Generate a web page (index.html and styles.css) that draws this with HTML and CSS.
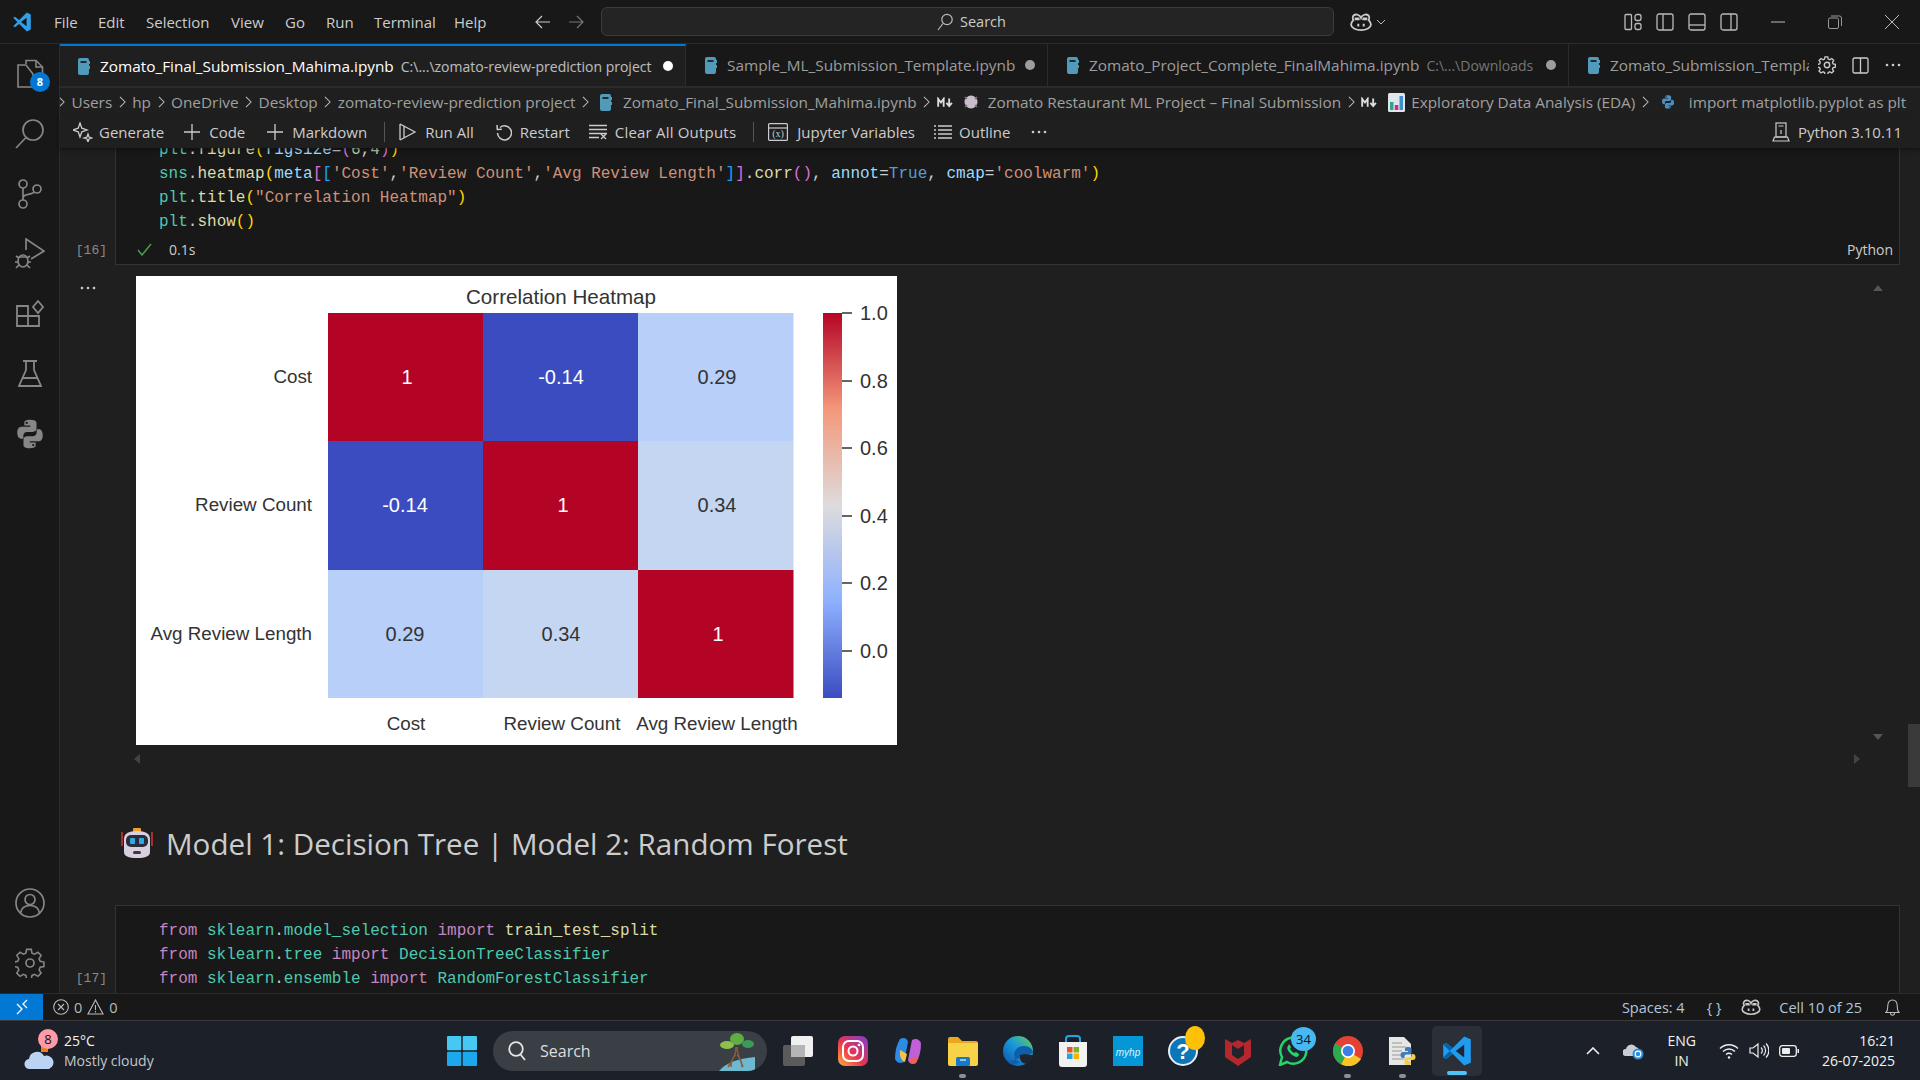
FILE: index.html
```html
<!DOCTYPE html>
<html lang="en">
  <head>
    <meta charset="UTF-8" />
    <title>Zomato_Final_Submission_Mahima.ipynb</title>
    <link rel="stylesheet" href="styles.css">
  </head>
  <body>
    <svg class="defs">
      <symbol id="nb" viewBox="0 0 12 17"><rect x="0" y="0" width="11" height="17" rx="2" fill="#519aba"/><rect x="2.5" y="3" width="6" height="2" fill="#1f2c33"/><rect x="11" y="3" width="1" height="3" fill="#519aba"/><rect x="11" y="8" width="1" height="3" fill="#519aba"/></symbol>
      <symbol id="py" viewBox="0 0 24 24"><path fill="currentColor" d="M12 2C8 2 8 3.7 8 3.7V6h4.2v.8H6.1S3 6.5 3 11s2.7 4.4 2.7 4.4h1.6v-2.2s-.1-2.7 2.7-2.7h4.1s2.5 0 2.500-2.500V4.500S17.100 2 12 2zM9.700 3.400a.8.8 0 1 1 0 1.600.8.8 0 0 1 0-1.600z"/><path fill="currentColor" transform="rotate(180 12 12)" d="M12 2C8 2 8 3.700 8 3.700V6h4.200v.8H6.100S3 6.500 3 11s2.700 4.400 2.700 4.400h1.600v-2.200s-.1-2.700 2.700-2.700h4.100s2.500 0 2.500-2.500V4.500S17.100 2 12 2zM9.700 3.400a.8.8 0 1 1 0 1.600.8.8 0 0 1 0-1.600z"/></symbol>
      <symbol id="copilot" viewBox="0 0 24 20"><path d="M12 5.500C10.500 1.500 6 1 4 2.500 2.500 3.800 2.600 6.500 3.500 8 2 9.500 1 11 1 13c0 3 5 6 11 6s11-3 11-6c0-2-1-3.500-2.500-5 .9-1.500 1-4.200-.5-5.500C18 1 13.500 1.500 12 5.500z" fill="none" stroke="currentColor" stroke-width="2"/><path d="M5 5h4.500a2 2 0 0 1 1 2v1H5zM19 5h-4.500a2 2 0 0 0-1 2v1H19z" fill="currentColor"/><path d="M9 12v3M15 12v3" stroke="currentColor" stroke-width="2.200"/></symbol>
      <symbol id="plus" viewBox="0 0 16 16"><path d="M8 0v16M0 8h16" stroke="currentColor" stroke-width="1.300" fill="none"/></symbol>
      <symbol id="chev" viewBox="0 0 8 14"><path d="M1 1l6 6-6 6" stroke="currentColor" stroke-width="1.200" fill="none"/></symbol>
      <symbol id="md" viewBox="0 0 18 12"><path d="M1 10.500V2l3 4 3-4v8.500" stroke="currentColor" stroke-width="2" fill="none"/><path d="M13 1.500V9M10 6.500l3 3.500 3-3.500" stroke="currentColor" stroke-width="2" fill="none"/></symbol>
      <symbol id="dots" viewBox="0 0 16 4"><circle cx="2" cy="2" r="1.300" fill="currentColor"/><circle cx="8" cy="2" r="1.300" fill="currentColor"/><circle cx="14" cy="2" r="1.300" fill="currentColor"/></symbol>
    </svg>

    <header class="titlebar">
      <svg class="logo" width="20" height="20" viewBox="0 0 100 100"><path fill="#2f9fe8" fill-rule="evenodd" d="M74 3L36 40 15 24 6 29 27 50 6 71l9 5 21-16 38 37 20-9V12zM73 29L45 50l28 21z"/></svg>
      <nav class="menu">
        <span>File</span><span>Edit</span><span>Selection</span><span>View</span><span>Go</span><span>Run</span><span>Terminal</span><span>Help</span>
      </nav>
      <svg class="nav-arrow" width="16" height="14" viewBox="0 0 16 14"><path d="M15 7H1M7 1L1 7l6 6" stroke="#ccc" stroke-width="1.200" fill="none"/></svg>
      <svg class="nav-arrow nav-fwd" width="16" height="14" viewBox="0 0 16 14"><path d="M1 7h14M9 1l6 6-6 6" stroke="#777" stroke-width="1.200" fill="none"/></svg>
      <div class="cmd">
        <svg width="16" height="18" viewBox="0 0 16 18"><circle cx="10" cy="6.500" r="5.200" fill="none" stroke="#bbb" stroke-width="1.200"/><path d="M6 10.500L1 17" stroke="#bbb" stroke-width="1.200"/></svg>
        <span>Search</span>
      </div>
      <svg class="title-copilot" width="22" height="18"><use href="#copilot"/></svg>
      <svg class="title-chev" width="10" height="6" viewBox="0 0 10 6"><path d="M1 1l4 4 4-4" stroke="#bbb" fill="none"/></svg>
      <div class="layout-icons">
        <svg width="18" height="18" viewBox="0 0 18 18" fill="none" stroke="#bbb" stroke-width="1.300"><rect x="1" y="1.500" width="6.500" height="15" rx="1"/><rect x="11" y="1.500" width="6" height="6" rx="2"/><rect x="11" y="10.500" width="6" height="6" rx="2"/></svg>
        <svg width="18" height="18" viewBox="0 0 18 18" fill="none" stroke="#bbb" stroke-width="1.300"><rect x="1" y="1" width="16" height="16" rx="2"/><path d="M7 1v16"/></svg>
        <svg width="18" height="18" viewBox="0 0 18 18" fill="none" stroke="#bbb" stroke-width="1.300"><rect x="1" y="1" width="16" height="16" rx="2"/><path d="M1 12h16"/></svg>
        <svg width="18" height="18" viewBox="0 0 18 18" fill="none" stroke="#bbb" stroke-width="1.300"><rect x="1" y="1" width="16" height="16" rx="2"/><path d="M11 1v16"/></svg>
      </div>
      <div class="win-btns">
        <svg width="14" height="14" viewBox="0 0 14 14"><path d="M0 7h14" stroke="#bbb"/></svg>
        <svg width="14" height="14" viewBox="0 0 14 14" fill="none" stroke="#999"><rect x=".5" y="3" width="10" height="10.500" rx="1.500"/><path d="M3 1h8.500a2 2 0 0 1 2 2v8"/></svg>
        <svg width="14" height="14" viewBox="0 0 14 14"><path d="M0 0l14 14M14 0L0 14" stroke="#bbb"/></svg>
      </div>
    </header>

    <div class="workbench">
      <aside class="activity">
        <div class="act-top">
          <div class="act-item act-files">
            <svg width="28" height="30" viewBox="0 0 28 30" fill="none" stroke="#868686" stroke-width="1.600"><path d="M10 5V1.500h10l6.500 6.500v16H17"/><path d="M20 1.500V8h6.500"/><path d="M10 6H2v22h15V15z"/></svg>
            <span class="act-badge">8</span>
          </div>
          <div class="act-item"><svg width="30" height="32" viewBox="0 0 30 32" fill="none" stroke="#868686" stroke-width="1.700"><circle cx="18" cy="12" r="10"/><path d="M11 19.500L1 30"/></svg></div>
          <div class="act-item"><svg width="24" height="30" viewBox="0 0 24 30" fill="none" stroke="#868686" stroke-width="1.700"><circle cx="5" cy="5" r="4"/><circle cx="5" cy="25" r="4"/><circle cx="19" cy="10" r="4"/><path d="M5 9v12M5 19c0-5 10-3 11-6"/></svg></div>
          <div class="act-item"><svg width="30" height="32" viewBox="0 0 30 32" fill="none" stroke="#868686" stroke-width="1.700"><path d="M11 12V1l18 12-13 8"/><ellipse cx="8" cy="23" rx="5" ry="6"/><path d="M1 18l3 2M15 18l-3 2M0 24h3M13 24h3M1 30l3-3M15 30l-3-3M4 19h8"/></svg></div>
          <div class="act-item"><svg width="28" height="28" viewBox="0 0 28 28" fill="none" stroke="#868686" stroke-width="1.800"><path d="M1 6h11v20H1zM1 16h22v10H12M12 6v10"/><path d="M22 1l5 6-5 6-5-6z"/></svg></div>
          <div class="act-item"><svg width="24" height="28" viewBox="0 0 24 28" fill="none" stroke="#868686" stroke-width="1.800"><path d="M5 1h14M8 1v9L1 26h22l-7-16V1M5 18h14"/></svg></div>
          <div class="act-item"><svg class="act-py" width="34" height="34"><use href="#py"/></svg></div>
        </div>
        <div class="act-bottom">
          <div class="act-item"><svg width="30" height="30" viewBox="0 0 30 30" fill="none" stroke="#868686" stroke-width="1.700"><circle cx="15" cy="15" r="14"/><circle cx="15" cy="11.500" r="5"/><path d="M5.500 25c1-6 5-7.500 9.500-7.500s8.500 1.500 9.500 7.500"/></svg></div>
          <div class="act-item"><svg width="30" height="30" viewBox="0 0 30 30" fill="none" stroke="#868686" stroke-width="1.700"><circle cx="15" cy="15" r="4"/><path d="M12.500 1.500h5l.8 4 2.800 1.200 3.500-2.200 3.500 3.500-2.200 3.500 1.200 2.800 4 .8v4.800l-4 .8-1.200 2.800 2.200 3.500-3.500 3.500-3.500-2.200-2.800 1.200-.8 4h-5l-.8-4-2.800-1.200-3.500 2.200-3.500-3.500 2.200-3.500-1.200-2.800-4-.8v-4.800l4-.8 1.200-2.800-2.200-3.500 3.500-3.500 3.500 2.200 2.800-1.200z" transform="scale(.93)"/></svg></div>
        </div>
      </aside>

      <main class="editor">
        <div class="tabs">
          <div class="tab tab-active tab-1">
            <svg class="tab-icon" width="12" height="17"><use href="#nb"/></svg>
            <span class="tab-name">Zomato_Final_Submission_Mahima.ipynb</span>
            <span class="tab-path">C:\...\zomato-review-prediction project</span>
            <i class="dot"></i>
          </div>
          <div class="tab tab-2">
            <svg class="tab-icon" width="12" height="17"><use href="#nb"/></svg>
            <span class="tab-name">Sample_ML_Submission_Template.ipynb</span>
            <i class="dot"></i>
          </div>
          <div class="tab tab-3">
            <svg class="tab-icon" width="12" height="17"><use href="#nb"/></svg>
            <span class="tab-name">Zomato_Project_Complete_FinalMahima.ipynb</span>
            <span class="tab-path">C:\...\Downloads</span>
            <i class="dot"></i>
          </div>
          <div class="tab tab-4">
            <svg class="tab-icon" width="12" height="17"><use href="#nb"/></svg>
            <span class="tab-name">Zomato_Submission_Template.ipynb</span>
          </div>
          <div class="tab-actions">
            <svg width="18" height="18" viewBox="0 0 30 30" fill="none" stroke="#ccc" stroke-width="2.400"><circle cx="15" cy="15" r="4.500"/><path d="M12.500 1.500h5l.8 4 2.800 1.200 3.500-2.200 3.500 3.500-2.200 3.500 1.200 2.800 4 .8v4.800l-4 .8-1.200 2.800 2.200 3.500-3.500 3.500-3.500-2.200-2.800 1.200-.8 4h-5l-.8-4-2.800-1.200-3.500 2.200-3.500-3.500 2.200-3.500-1.200-2.800-4-.8v-4.800l4-.8 1.200-2.800-2.200-3.500 3.500-3.500 3.500 2.200 2.800-1.200z" transform="scale(.93)"/></svg>
            <svg width="17" height="17" viewBox="0 0 17 17" fill="none" stroke="#ccc" stroke-width="1.300"><rect x="1" y="1" width="15" height="15" rx="1.500"/><path d="M8.500 1v15"/></svg>
            <svg class="tab-dots" width="16" height="4"><use href="#dots"/></svg>
          </div>
        </div>

        <div class="crumbs">
          <svg class="sep sep-first" width="7" height="12"><use href="#chev"/></svg>
          <span>Users</span>
          <svg class="sep" width="7" height="12"><use href="#chev"/></svg>
          <span>hp</span>
          <svg class="sep" width="7" height="12"><use href="#chev"/></svg>
          <span>OneDrive</span>
          <svg class="sep" width="7" height="12"><use href="#chev"/></svg>
          <span>Desktop</span>
          <svg class="sep" width="7" height="12"><use href="#chev"/></svg>
          <span>zomato-review-prediction project</span>
          <svg class="sep" width="7" height="12"><use href="#chev"/></svg>
          <svg class="crumb-nb" width="12" height="17"><use href="#nb"/></svg>
          <span>Zomato_Final_Submission_Mahima.ipynb</span>
          <svg class="sep" width="7" height="12"><use href="#chev"/></svg>
          <svg class="md" width="17" height="11"><use href="#md"/></svg>
          <svg class="crumb-emoji" width="16" height="16" viewBox="0 0 16 16"><circle cx="8" cy="8" r="6.500" fill="#c9bccb"/><path d="M2 3l2 2M14 3l-2 2M2 13l2-2M14 13l-2-2" stroke="#777" stroke-width="1.500"/></svg>
          <span>Zomato Restaurant ML Project – Final Submission</span>
          <svg class="sep" width="7" height="12"><use href="#chev"/></svg>
          <svg class="md" width="17" height="11"><use href="#md"/></svg>
          <svg class="crumb-chart" width="17" height="19" viewBox="0 0 17 19"><rect width="17" height="19" rx="1.500" fill="#dfe6ea"/><rect x="2" y="9" width="3.500" height="8" fill="#2fa58e"/><rect x="6.800" y="12" width="3.500" height="5" fill="#e0218a"/><rect x="11.500" y="3" width="3.500" height="14" fill="#3d8fd1"/></svg>
          <span>Exploratory Data Analysis (EDA)</span>
          <svg class="sep" width="7" height="12"><use href="#chev"/></svg>
          <svg class="crumb-py" width="16" height="16"><use href="#py"/></svg>
          <span class="crumb-last">import matplotlib.pyplot as plt</span>
        </div>

        <div class="toolbar">
          <div class="tool tool-gen">
            <svg width="20" height="20" viewBox="0 0 20 20" fill="none" stroke="#ccc" stroke-width="1.300"><path d="M7 1l1.800 5.200L14 8l-5.200 1.800L7 15l-1.800-5.200L0 8l5.200-1.800z"/><path d="M15 12l1 3 3 1-3 1-1 3-1-3-3-1 3-1z"/></svg>
            <span>Generate</span>
          </div>
          <div class="tool tool-code"><svg width="16" height="16"><use href="#plus"/></svg><span>Code</span></div>
          <div class="tool tool-md"><svg width="16" height="16"><use href="#plus"/></svg><span>Markdown</span></div>
          <i class="tool-sep"></i>
          <div class="tool tool-run">
            <svg width="18" height="18" viewBox="0 0 18 18" fill="none" stroke="#ccc" stroke-width="1.300"><path d="M1 1l0 16M1 1l15 8-15 8M5 3.500l0 11"/></svg>
            <span>Run All</span>
          </div>
          <div class="tool tool-restart">
            <svg width="16" height="17" viewBox="0 0 16 17" fill="none" stroke="#ccc" stroke-width="1.500"><path d="M4 3.500A7 7 0 1 1 1.500 9"/><path d="M1 1l.3 4.500 4.500-.3"/></svg>
            <span>Restart</span>
          </div>
          <div class="tool tool-clear">
            <svg width="18" height="16" viewBox="0 0 18 16" fill="none" stroke="#ccc" stroke-width="1.300"><path d="M0 1.500h18M0 5.500h18M0 9.500h18M0 13.500h10M12 10l5 5M17 10l-5 5"/></svg>
            <span>Clear All Outputs</span>
          </div>
          <i class="tool-sep tool-sep2"></i>
          <div class="tool tool-vars">
            <svg width="20" height="18" viewBox="0 0 20 18" fill="none" stroke="#ccc" stroke-width="1.200"><rect x=".6" y=".6" width="18.800" height="16.800" rx="1"/><path d="M1 5h18"/><text class="var-x" x="10" y="14" text-anchor="middle">(x)</text></svg>
            <span>Jupyter Variables</span>
          </div>
          <div class="tool tool-outline">
            <svg width="18" height="16" viewBox="0 0 18 16" fill="none" stroke="#ccc" stroke-width="1.400"><path d="M0 2h2M4 2h14M0 6h2M4 6h14M0 10h2M4 10h14M0 14h2M4 14h14"/></svg>
            <span>Outline</span>
          </div>
          <svg class="tool-dots" width="16" height="4"><use href="#dots"/></svg>
          <div class="tool tool-kernel">
            <svg width="18" height="20" viewBox="0 0 18 20" fill="none" stroke="#ccc" stroke-width="1.200"><rect x="4" y="1" width="10" height="14"/><path d="M6.500 4h5M1 19l1.500-4h13l1.500 4zM9 8v4"/></svg>
            <span>Python 3.10.11</span>
          </div>
        </div>

        <div class="notebook">
          <section class="cell cell-16">
            <div class="cell-gutter">
              <span class="exec-count">[16]</span>
            </div>
            <div class="cell-body">
              <pre class="code"><span class="v2">plt</span>.<span class="f">figure</span><span class="b1">(</span><span class="v">figsize</span>=<span class="b2">(</span><span class="n">6</span>,<span class="n">4</span><span class="b2">)</span><span class="b1">)</span>
<span class="v2">sns</span>.<span class="f">heatmap</span><span class="b1">(</span><span class="v">meta</span><span class="b2">[</span><span class="b3">[</span><span class="s">'Cost'</span>,<span class="s">'Review Count'</span>,<span class="s">'Avg Review Length'</span><span class="b3">]</span><span class="b2">]</span>.<span class="f">corr</span><span class="b2">()</span>, <span class="v">annot</span>=<span class="c">True</span>, <span class="v">cmap</span>=<span class="s">'coolwarm'</span><span class="b1">)</span>
<span class="v2">plt</span>.<span class="f">title</span><span class="b1">(</span><span class="s">"Correlation Heatmap"</span><span class="b1">)</span>
<span class="v2">plt</span>.<span class="f">show</span><span class="b1">()</span></pre>
              <div class="cell-status">
                <svg width="15" height="13" viewBox="0 0 15 13"><path d="M1 7l4 5L14 1" stroke="#4ea24e" stroke-width="1.400" fill="none"/></svg>
                <span class="exec-time">0.1s</span>
                <span class="cell-lang">Python</span>
              </div>
            </div>
          </section>

          <section class="output">
            <div class="out-gutter"><svg width="16" height="4"><use href="#dots"/></svg></div>
            <div class="out-body">
              <svg class="plot" width="761" height="469" viewBox="0 0 761 469">
                <defs>
                  <linearGradient id="coolwarm" x1="0" y1="1" x2="0" y2="0">
                    <stop offset="0" stop-color="#3b4cc0"/>
                    <stop offset=".25" stop-color="#8db0fe"/>
                    <stop offset=".5" stop-color="#dddcdc"/>
                    <stop offset=".75" stop-color="#f4987a"/>
                    <stop offset="1" stop-color="#b40426"/>
                  </linearGradient>
                </defs>
                <rect width="761" height="469" fill="#fff"/>
                <rect x="192" y="37" width="155" height="128" fill="#b40426"/>
                <rect x="347" y="37" width="155" height="128" fill="#3b4cc0"/>
                <rect x="502" y="37" width="155.500" height="128" fill="#b7cff9"/>
                <rect x="192" y="165" width="155" height="129" fill="#3b4cc0"/>
                <rect x="347" y="165" width="155" height="129" fill="#b40426"/>
                <rect x="502" y="165" width="155.500" height="129" fill="#c5d6f2"/>
                <rect x="192" y="294" width="155" height="128" fill="#b7cff9"/>
                <rect x="347" y="294" width="155" height="128" fill="#c5d6f2"/>
                <rect x="502" y="294" width="155.500" height="128" fill="#b40426"/>
                <rect x="687" y="37" width="19" height="385" fill="url(#coolwarm)"/>
                <path d="M706 37h10M706 105h10M706 172h10M706 240h10M706 307h10M706 375h10" stroke="#333" stroke-width="1.500"/>
                <text class="p-title" x="425" y="28">Correlation Heatmap</text>
                <g class="p-ylabel">
                  <text x="176" y="107">Cost</text>
                  <text x="176" y="235">Review Count</text>
                  <text x="176" y="364">Avg Review Length</text>
                </g>
                <g class="p-xlabel">
                  <text x="270" y="454">Cost</text>
                  <text x="426" y="454">Review Count</text>
                  <text x="581" y="454">Avg Review Length</text>
                </g>
                <g class="p-val">
                  <text x="271" y="108" fill="#fff">1</text>
                  <text x="425" y="108" fill="#fff">-0.14</text>
                  <text x="581" y="108">0.29</text>
                  <text x="269" y="236" fill="#fff">-0.14</text>
                  <text x="427" y="236" fill="#fff">1</text>
                  <text x="581" y="236">0.34</text>
                  <text x="269" y="365">0.29</text>
                  <text x="425" y="365">0.34</text>
                  <text x="582" y="365" fill="#fff">1</text>
                </g>
                <g class="p-tick">
                  <text x="724" y="44">1.0</text>
                  <text x="724" y="112">0.8</text>
                  <text x="724" y="179">0.6</text>
                  <text x="724" y="247">0.4</text>
                  <text x="724" y="314">0.2</text>
                  <text x="724" y="382">0.0</text>
                </g>
              </svg>
              <div class="out-scroll">
                <svg width="10" height="6" viewBox="0 0 10 6"><path d="M5 0l5 6H0z" fill="#555"/></svg>
                <svg width="10" height="6" viewBox="0 0 10 6"><path d="M5 6l5-6H0z" fill="#555"/></svg>
              </div>
            </div>
            <div class="out-hscroll">
              <svg width="6" height="10" viewBox="0 0 6 10"><path d="M0 5l6-5v10z" fill="#444"/></svg>
              <svg width="6" height="10" viewBox="0 0 6 10"><path d="M6 5L0 0v10z" fill="#444"/></svg>
            </div>
          </section>

          <h2 class="md-head">
            <svg width="32" height="32" viewBox="0 0 32 32"><path d="M1 5v14M31 5v14" stroke="#d33" stroke-width="1.500"/><rect x="12" y="1" width="8" height="5" rx="1" fill="#f0a030"/><path d="M3 12Q3 4 16 4t13 8v13q0 6-13 6T3 25z" fill="#d8d0de"/><rect x="5" y="8" width="22" height="12" rx="5" fill="#2a2d3c"/><rect x="9" y="11" width="5" height="6" rx="1" fill="#2fa8e8"/><rect x="18" y="11" width="5" height="6" rx="1" fill="#2fa8e8"/><rect x="12" y="24" width="8" height="3" rx="1.500" fill="#3a3840"/></svg>
            <span>Model 1: Decision Tree | Model 2: Random Forest</span>
          </h2>

          <section class="cell cell-17">
            <div class="cell-gutter"><span class="exec-count">[17]</span></div>
            <div class="cell-body">
              <pre class="code"><span class="k">from</span> <span class="v2">sklearn</span>.<span class="v2">model_selection</span> <span class="k">import</span> <span class="f">train_test_split</span>
<span class="k">from</span> <span class="v2">sklearn</span>.<span class="v2">tree</span> <span class="k">import</span> <span class="v2">DecisionTreeClassifier</span>
<span class="k">from</span> <span class="v2">sklearn</span>.<span class="v2">ensemble</span> <span class="k">import</span> <span class="v2">RandomForestClassifier</span></pre>
            </div>
          </section>
          <div class="scroll-thumb"></div>
        </div>
      </main>
    </div>

    <footer class="statusbar">
      <div class="remote"><svg width="12" height="16" viewBox="0 0 12 16"><path d="M1 15l5-5-5-5M11 1L7 5l4 4" stroke="#fff" stroke-width="1.300" fill="none"/></svg></div>
      <svg class="st-err" width="16" height="16" viewBox="0 0 16 16" fill="none" stroke="#bbb" stroke-width="1.100"><circle cx="8" cy="8" r="7.300"/><path d="M5 5l6 6M11 5l-6 6"/></svg>
      <span>0</span>
      <svg class="st-warn" width="17" height="16" viewBox="0 0 17 16" fill="none" stroke="#bbb" stroke-width="1.100"><path d="M8.500 1L16 15H1zM8.500 6v5M8.500 12v1.500"/></svg>
      <span>0</span>
      <div class="st-right">
        <span>Spaces: 4</span>
        <span class="st-braces">{ }</span>
        <svg class="st-copilot" width="20" height="16"><use href="#copilot"/></svg>
        <span class="st-cell">Cell 10 of 25</span>
        <svg class="st-bell" width="15" height="17" viewBox="0 0 15 17" fill="none" stroke="#bbb" stroke-width="1.100"><path d="M1 13.500c2-1.500 1.500-4 1.800-7C3 3 5 1 7.500 1s4.500 2 4.700 5.500c.3 3-.2 5.500 1.800 7zM5.500 14c0 3 4 3 4 0"/></svg>
      </div>
    </footer>

    <div class="taskbar">
      <div class="weather">
        <svg class="w-cloud" width="31" height="24" viewBox="0 0 31 24"><rect x="17" y="0" width="7" height="6" fill="#ef7d18"/><path d="M6 23a5 5 0 0 1-1-10 8 8 0 0 1 15-3 6.500 6.500 0 0 1 5 13z" fill="#bcd4f4"/></svg>
        <span class="w-badge">8</span>
        <div class="w-text"><span class="w-temp">25°C</span><span class="w-desc">Mostly cloudy</span></div>
      </div>
      <svg class="start" width="30" height="30" viewBox="0 0 30 30"><rect width="14.300" height="14.300" rx="1" fill="#47c8f2"/><rect x="15.700" width="14.300" height="14.300" rx="1" fill="#47c8f2"/><rect y="15.700" width="14.300" height="14.300" rx="1" fill="#1ca8ea"/><rect x="15.700" y="15.700" width="14.300" height="14.300" rx="1" fill="#1ca8ea"/></svg>
      <div class="tb-search">
        <svg width="18" height="20" viewBox="0 0 18 20" fill="none" stroke="#e4e4e4" stroke-width="1.800"><circle cx="8" cy="8" r="6.800"/><path d="M12.500 13.500L17 19"/></svg>
        <span>Search</span>
        <svg class="tb-tree" width="36" height="38" viewBox="0 0 36 38"><path d="M0 38q10-12 36-14v14z" fill="#6cb9d0"/><path d="M17 14c0 8-3 12-8 20M18 14c0 8 4 14 6 20M17 22c-3 2-5 6-5 12M18 22c3 3 5 6 5 12" stroke="#8a5a34" stroke-width="1.500" fill="none"/><ellipse cx="8" cy="12" rx="7" ry="4" fill="#8fc04a"/><ellipse cx="18" cy="6" rx="7" ry="6" fill="#5fae42"/><ellipse cx="29" cy="11" rx="6" ry="4" fill="#3c9a58"/></svg>
      </div>
      <div class="tb-apps">
        <div class="app"><svg width="30" height="30" viewBox="0 0 30 30"><rect x="0" y="9" width="22" height="21" rx="2" fill="#5b5b5b"/><rect x="8" y="0" width="22" height="21" rx="2" fill="#f0f0f0"/><rect x="8" y="9" width="14" height="12" fill="#b5b5b5"/></svg></div>
        <div class="app"><svg width="30" height="30" viewBox="0 0 30 30"><defs><linearGradient id="ig" x1="0" y1="1" x2="1" y2="0"><stop offset="0" stop-color="#fbb03b"/><stop offset=".45" stop-color="#e8334f"/><stop offset="1" stop-color="#7a3fd6"/></linearGradient></defs><rect width="30" height="30" rx="7" fill="url(#ig)"/><rect x="5" y="5" width="20" height="20" rx="6" fill="none" stroke="#fff" stroke-width="2"/><circle cx="15" cy="15" r="4.500" fill="none" stroke="#fff" stroke-width="2"/><circle cx="21" cy="9" r="1.300" fill="#fff"/></svg></div>
        <div class="app"><svg width="30" height="30" viewBox="0 0 30 30"><path d="M7 3q6-3 8 3l-4 20q-6 3-9-3 0-12 5-20z" fill="#2d8be8"/><path d="M7 14q-1 10 5 12l2-8z" fill="#f5c542"/><path d="M23 27q-6 3-8-3l4-20q6-3 9 3 0 12-5 20z" fill="#c15fd6"/><path d="M16 24q2 5 7 3l2-7z" fill="#f0614f"/></svg></div>
        <div class="app app-dot"><svg width="30" height="30" viewBox="0 0 30 30"><path d="M0 3a2 2 0 0 1 2-2h8l4 4h14a2 2 0 0 1 2 2v2H0z" fill="#e9a820"/><path d="M0 7h30v21a2 2 0 0 1-2 2H2a2 2 0 0 1-2-2z" fill="#f8d247"/><rect x="8" y="21" width="14" height="9" rx="1.500" fill="#1779c9"/><path d="M12 24h6" stroke="#bde" stroke-width="1.500"/></svg></div>
        <div class="app"><svg width="30" height="30" viewBox="0 0 30 30"><defs><linearGradient id="edg" x1="0" y1="1" x2="1" y2="0"><stop offset="0" stop-color="#0c4fa5"/><stop offset=".55" stop-color="#1a9bdc"/><stop offset="1" stop-color="#6bd14a"/></linearGradient></defs><circle cx="15" cy="15" r="15" fill="url(#edg)"/><path d="M30 17c0-4-4-7-9-7-7 0-10 5-10 9 0 3 3 7 6 7-2 2-8 3-12 0" fill="#0f5ea8"/><path d="M17 19c3-1 8-1 13 0-1 4-3 7-6 9-5 0-8-4-7-9z" fill="#1f2530"/></svg></div>
        <div class="app"><svg width="30" height="32" viewBox="0 0 30 32"><path d="M8 8V4q0-3 3-3h8q3 0 3 3v4" fill="none" stroke="#1fa8e0" stroke-width="2"/><path d="M1 7h28v22q0 3-3 3H4q-3 0-3-3z" fill="#f2f2f2"/><rect x="9" y="12" width="5.500" height="5.500" fill="#e8532b"/><rect x="15.500" y="12" width="5.500" height="5.500" fill="#7cb428"/><rect x="9" y="18.500" width="5.500" height="5.500" fill="#1fa8e0"/><rect x="15.500" y="18.500" width="5.500" height="5.500" fill="#f5b400"/></svg></div>
        <div class="app"><svg width="30" height="30" viewBox="0 0 30 30"><rect width="30" height="30" fill="#0596d6"/><text class="hp-text" x="15" y="20" text-anchor="middle">myhp</text></svg></div>
        <div class="app"><svg width="30" height="30" viewBox="0 0 30 30"><circle cx="15" cy="15" r="14" fill="#0b77b8" stroke="#e8eef2" stroke-width="2"/><text class="help-text" x="15" y="23" text-anchor="middle">?</text></svg><i class="app-yellow"></i></div>
        <div class="app"><svg width="26" height="30" viewBox="0 0 26 30"><path d="M0 3l7 4 6-3 6 3 7-4v18l-13 9L0 21z" fill="#b3272d"/><path d="M7 9v10l6 4 6-4V9l-6 4z" fill="#1f232b"/></svg></div>
        <div class="app"><svg width="30" height="30" viewBox="0 0 30 30"><path d="M2 29l2-8a13 13 0 1 1 5 5z" fill="#1f2530" stroke="#25d366" stroke-width="2.500"/><path d="M10 10q-2 2 1 6t7 5q3 0 3-3l-3-2-2 1q-3-2-4-4l1-2-2-3z" fill="#25d366"/></svg><span class="app-count">34</span></div>
        <div class="app app-dot"><svg width="30" height="30" viewBox="0 0 30 30"><circle cx="15" cy="15" r="15" fill="#e34133"/><path d="M15 15L28 23A15 15 0 0 1 8 28.300z" fill="#f7c325"/><path d="M15 15L8 28.300A15 15 0 0 1 2.200 7.200z" fill="#2da94f"/><circle cx="15" cy="15" r="7" fill="#fff"/><circle cx="15" cy="15" r="5.300" fill="#3b7ee8"/></svg></div>
        <div class="app app-dot"><svg class="app-pyfile" width="30" height="30" viewBox="0 0 30 30"><path d="M1 1h15l7 7v21H1z" fill="#e6e6e6"/><path d="M4 7h10M4 11h14M4 15h10M4 19h9M4 23h12" stroke="#999" stroke-width="1"/><path d="M20 11c-3 0-3 1.500-3 1.500V15h3v1h-5s-2.500 0-2.500 3 2.500 3 2.500 3h1.500v-1.500s0-2 2-2h3s2 0 2-2v-3S24 11 20 11z" fill="#3f7db8"/><path d="M20 29c3 0 3-1.500 3-1.500V25h-3v-1h5s2.500 0 2.500-3-2.500-3-2.500-3h-1.500v1.500s0 2-2 2h-3s-2 0-2 2v3S16 29 20 29z" fill="#f2cf45"/></svg></div>
        <div class="app app-active"><svg width="30" height="30" viewBox="0 0 100 100"><path fill="#1f9cf0" d="M74 2L36 40 14 23 4 28v44l10 5 22-17 38 38 22-9V11z"/><path fill="#0065a9" d="M4 28l10-5 22 17-10 10zM4 72l10 5 22-17-10-10z"/><path fill="#1f2530" d="M74 28L46 50l28 22z"/></svg></div>
      </div>
      <div class="tray">
        <svg width="14" height="8" viewBox="0 0 14 8"><path d="M1 7l6-6 6 6" stroke="#eee" stroke-width="1.600" fill="none"/></svg>
        <svg class="tray-cloud" width="21" height="18" viewBox="0 0 21 18"><path d="M3 14a3.500 3.500 0 0 1 0-7 5.500 5.500 0 0 1 10-2 4 4 0 0 1 3 3l-5 6z" fill="#c9ccd1"/><circle cx="15" cy="12" r="5.500" fill="#2b8fe0"/><circle cx="15" cy="12" r="2.800" fill="none" stroke="#fff" stroke-width="1.200"/></svg>
        <div class="lang"><span>ENG</span><span>IN</span></div>
        <svg class="tray-wifi" width="20" height="16" viewBox="0 0 20 16" fill="none" stroke="#eee" stroke-width="1.400"><path d="M1 5.500c5-5 13-5 18 0M4 8.500c3.500-3.300 8.500-3.300 12 0M7 11.500c1.800-1.500 4.200-1.500 6 0"/><circle cx="10" cy="14.500" r="1.200" fill="#eee" stroke="none"/></svg>
        <svg class="tray-vol" width="20" height="17" viewBox="0 0 20 17" fill="none" stroke="#eee" stroke-width="1.200"><path d="M1 6v5h3l5 4V2L4 6z"/><path d="M12 5.500a4 4 0 0 1 0 6M14.500 3.500a7 7 0 0 1 0 10M17 1.500a10 10 0 0 1 0 14"/></svg>
        <svg class="tray-bat" width="20" height="12" viewBox="0 0 20 12"><rect x=".7" y=".7" width="16.600" height="10.600" rx="2.500" fill="none" stroke="#eee" stroke-width="1.300"/><rect x="3" y="3" width="8" height="6" rx="1" fill="#eee"/><rect x="18.500" y="4" width="1.500" height="4" fill="#eee"/></svg>
        <div class="clock"><span>16:21</span><span>26-07-2025</span></div>
      </div>
    </div>
  </body>
</html>
```

FILE: styles.css
```css
* {
  box-sizing: border-box;
  margin: 0;
  padding: 0;
}

html,
body {
  width: 1920px;
  height: 1080px;
  overflow: hidden;
}

body {
  display: flex;
  flex-direction: column;
  font-family: "Open Sans", "Noto Sans", sans-serif;
  font-size: 15px;
  color: #ccc;
  background-color: #181818;
}

svg {
  flex: none;
  display: block;
}

.defs {
  display: none;
}

/* title bar */
.titlebar {
  height: 44px;
  flex: none;
  display: flex;
  align-items: center;
  background-color: #181818;
  border-bottom: 1px solid #2b2b2b;
}

.logo {
  margin-left: 12px;
}

.menu {
  display: flex;
  margin-left: 22px;
  width: 480px;
  color: #ccc;
}

.menu span:nth-child(1) { width: 44px; }
.menu span:nth-child(2) { width: 48px; }
.menu span:nth-child(3) { width: 85px; }
.menu span:nth-child(4) { width: 54px; }
.menu span:nth-child(5) { width: 41px; }
.menu span:nth-child(6) { width: 48px; }
.menu span:nth-child(7) { width: 80px; }

.nav-arrow {
  margin-left: 1px;
}

.nav-fwd {
  margin-left: 17px;
}

.cmd {
  width: 733px;
  height: 29px;
  margin-left: 17px;
  padding-left: 8px;
  display: flex;
  align-items: center;
  justify-content: center;
  gap: 7px;
  background-color: #242424;
  border: 1px solid #3c3c3c;
  border-radius: 6px;
  font-size: 14.5px;
}

.title-copilot {
  margin-left: 16px;
  color: #ccc;
}

.title-chev {
  margin-left: 4px;
}

.layout-icons {
  display: flex;
  gap: 14px;
  margin-left: 238px;
}

.win-btns {
  display: flex;
  gap: 43px;
  margin-left: 33px;
}

/* layout */
.workbench {
  flex: 1;
  min-height: 0;
  display: flex;
}

.activity {
  width: 60px;
  flex: none;
  display: flex;
  flex-direction: column;
  justify-content: space-between;
  background-color: #181818;
  border-right: 1px solid #2b2b2b;
}

.act-top {
  display: flex;
  flex-direction: column;
}

.act-item {
  height: 60px;
  display: flex;
  align-items: center;
  justify-content: center;
  position: relative;
}

.act-py {
  color: #868686;
}

.act-badge {
  position: absolute;
  left: 30px;
  top: 28px;
  width: 20px;
  height: 20px;
  border-radius: 50%;
  background-color: #0078d4;
  color: #fff;
  font-size: 11px;
  font-weight: 700;
  text-align: center;
  line-height: 20px;
}

.editor {
  flex: 1;
  min-width: 0;
  display: flex;
  flex-direction: column;
}

/* tabs */
.tabs {
  height: 44px;
  flex: none;
  display: flex;
  background-color: #181818;
  border-bottom: 2px solid #2b2b2b;
  overflow: hidden;
  font-size: 15.35px;
}

.tab {
  display: flex;
  align-items: center;
  flex: none;
  color: #9d9d9d;
  border-right: 1px solid #2b2b2b;
  white-space: nowrap;
  height: 42px;
  overflow: hidden;
}

.tab-active {
  color: #fff;
  background-color: #1f1f1f;
  border-top: 2px solid #0078d4;
}

.tab-1 { width: 626px; padding-left: 18px; }
.tab-2 { width: 362px; padding-left: 19px; }
.tab-3 { width: 521px; padding-left: 19px; }
.tab-4 { width: 240px; padding-left: 19px; border-right: 0; }

.tab-name {
  margin-left: 10px;
}

.tab-path {
  margin-left: 7px;
  font-size: 14px;
  opacity: 0.7;
}

.dot {
  width: 10px;
  height: 10px;
  border-radius: 50%;
  background-color: #9d9d9d;
  margin-left: auto;
  margin-right: 12px;
}

.tab-active .dot {
  background-color: #fff;
}

.tab-actions {
  display: flex;
  align-items: center;
  gap: 16px;
  padding-left: 9px;
  color: #ccc;
}

/* breadcrumbs */
.crumbs {
  height: 28px;
  flex: none;
  display: flex;
  align-items: center;
  gap: 6.5px;
  background-color: #1f1f1f;
  color: #a0a0a0;
  font-size: 15.35px;
  white-space: nowrap;
  overflow: hidden;
}

.crumbs .sep {
  color: #bbb;
}

.sep-first {
  margin-left: -2px;
}

.md {
  color: #ddd;
  margin-right: 3px;
}

.crumb-nb {
  margin: 0 4px 0 5px;
}

.crumb-emoji {
  margin-right: 2px;
}

.crumb-py {
  color: #4b8fc0;
  margin: 0 6px 0 5px;
}

/* notebook toolbar */
.toolbar {
  height: 32px;
  flex: none;
  display: flex;
  align-items: center;
  padding-left: 13px;
  background-color: #1f1f1f;
  box-shadow: 0 2px 4px rgba(0, 0, 0, 0.4);
  position: relative;
  z-index: 1;
  color: #ccc;
}

.tool {
  display: flex;
  align-items: center;
  gap: 8px;
  white-space: nowrap;
  flex: none;
}

.tool-sep {
  width: 1px;
  height: 20px;
  background-color: #555;
  margin-left: 17px;
  flex: none;
}

.tool-gen { gap: 6px; }
.tool-code { margin-left: 20px; gap: 9px; }
.tool-md { margin-left: 22px; gap: 9px; }
.tool-run { margin-left: 14px; }
.tool-restart { margin-left: 22px; }
.tool-clear { margin-left: 19px; letter-spacing: 0.2px; }
.tool-sep2 { margin-left: 17px; }
.tool-vars { margin-left: 14px; gap: 9px; }
.tool-outline { margin-left: 19px; gap: 7px; }
.tool-dots { margin-left: 21px; color: #ccc; }
.tool-kernel { margin-left: auto; margin-right: 18px; }

.var-x {
  font-family: "Liberation Serif", serif;
  font-size: 10px;
  fill: #ccc;
  stroke: none;
}

/* notebook */
.notebook {
  flex: 1;
  min-height: 0;
  position: relative;
  overflow: hidden;
  background-color: #1f1f1f;
}

.cell {
  display: flex;
}

.cell-gutter {
  width: 55px;
  flex: none;
  display: flex;
  align-items: flex-end;
  justify-content: flex-end;
  padding-right: 8px;
}

.exec-count {
  font-family: "Liberation Mono", monospace;
  font-size: 13px;
  color: #8a8a8a;
  line-height: 28px;
}

.cell-body {
  width: 1785px;
  flex: none;
  background-color: #181818;
  border-left: 1px solid #333;
  border-right: 1px solid #333;
}

.cell-16 {
  margin-top: -10px;
  height: 127px;
}

.cell-16 .cell-body {
  border-bottom: 1px solid #333338;
}

.cell-16 .exec-count {
  line-height: 28px;
}

.code {
  font-family: "Liberation Mono", monospace;
  font-size: 16px;
  line-height: 24px;
  padding-left: 43px;
  color: #ccc;
}

.cell-status {
  display: flex;
  align-items: center;
  height: 27px;
  margin-top: 2px;
  padding-left: 21px;
  font-size: 14px;
}

.exec-time {
  margin-left: 17px;
}

.cell-lang {
  margin-left: auto;
  margin-right: 6px;
}

.k { color: #c586c0; }
.v { color: #9cdcfe; }
.v2 { color: #4ec9b0; }
.f { color: #dcdcaa; }
.s { color: #ce9178; }
.n { color: #b5cea8; }
.c { color: #569cd6; }
.b1 { color: #ffd700; }
.b2 { color: #da70d6; }
.b3 { color: #179fff; }

/* output */
.output {
  position: relative;
  display: grid;
  grid-template-columns: 76px 1fr;
  grid-template-rows: 480px 1fr;
  height: 505px;
}

.out-gutter {
  padding: 21px 0 0 20px;
  color: #ccc;
}

.out-body {
  display: flex;
  padding-top: 11px;
  padding-right: 37px;
  justify-content: space-between;
}

.out-scroll {
  display: flex;
  flex-direction: column;
  justify-content: space-between;
  height: 464px;
  padding-top: 9px;
}

.out-hscroll {
  grid-column: 2;
  display: flex;
  justify-content: space-between;
  width: 1726px;
  margin-left: -2px;
  margin-top: 9px;
  height: 10px;
}

.plot text {
  font-family: "Liberation Sans", Arial, sans-serif;
  fill: #333;
  font-size: 18.8px;
}

.plot .p-title {
  font-size: 20.6px;
  text-anchor: middle;
}

.p-ylabel text { text-anchor: end; }
.p-xlabel text { text-anchor: middle; }
.p-val text { text-anchor: middle; font-size: 20px; }
.p-val text[fill="#fff"] { fill: #fff; }
.p-tick text { font-size: 20px; }

/* markdown heading */
.md-head {
  display: flex;
  align-items: center;
  gap: 13px;
  height: 40px;
  margin-top: 53px;
  padding-left: 61px;
  font-size: 29.6px;
  font-weight: 400;
  color: #ccc;
  white-space: nowrap;
}

.cell-17 {
  margin-top: 42px;
  height: 88px;
  align-items: stretch;
}

.cell-17 .cell-body {
  border-top: 1px solid #333;
  padding-top: 13px;
}

.cell-17 .cell-gutter {
  padding-bottom: 0;
}

.scroll-thumb {
  position: absolute;
  right: 0;
  top: 576px;
  width: 12px;
  height: 63px;
  background-color: #3a3a3a;
}

/* status bar */
.statusbar {
  height: 28px;
  flex: none;
  display: flex;
  align-items: center;
  gap: 5px;
  background-color: #181818;
  border-top: 1px solid #2b2b2b;
  border-bottom: 1px solid #3a3a3a;
  color: #b8b8b8;
  font-size: 14.5px;
}

.remote {
  width: 43px;
  height: 100%;
  display: flex;
  align-items: center;
  justify-content: center;
  background-color: #0078d4;
  margin-right: 5px;
}

.st-right {
  margin-left: auto;
  display: flex;
  align-items: center;
  color: #b4c6d8;
  padding-right: 20px;
}

.st-braces { margin-left: 22px; }
.st-copilot { margin-left: 20px; color: #c8c8c8; }
.st-cell { margin-left: 18px; }
.st-bell { margin-left: 23px; }

/* windows taskbar */
.taskbar {
  height: 59px;
  flex: none;
  display: flex;
  align-items: center;
  background-color: #1c2129;
  color: #f2f2f2;
}

.weather {
  width: 447px;
  height: 100%;
  display: flex;
  align-items: center;
  position: relative;
  padding-left: 24px;
}

.w-cloud {
  margin-top: 14px;
}

.w-badge {
  position: absolute;
  left: 38px;
  top: 8px;
  width: 20px;
  height: 20px;
  border-radius: 50%;
  background-color: #ff9aa6;
  color: #111;
  font-size: 13px;
  line-height: 20px;
  text-align: center;
}

.w-text {
  display: flex;
  flex-direction: column;
  margin-left: 9px;
  font-size: 14px;
  line-height: 20px;
}

.w-desc {
  color: #c4c6ca;
}

.start {
  flex: none;
}

.tb-search {
  width: 274px;
  height: 40px;
  margin-left: 16px;
  display: flex;
  align-items: center;
  padding-left: 15px;
  gap: 14px;
  background-color: #3a3e45;
  border-radius: 20px;
  font-size: 16px;
  color: #ddd;
  overflow: hidden;
}

.tb-tree {
  margin-left: auto;
  margin-right: 12px;
  margin-top: 2px;
}

.tb-apps {
  display: flex;
  margin-left: 3px;
}

.app {
  width: 55px;
  height: 50px;
  display: flex;
  align-items: center;
  justify-content: center;
  position: relative;
  flex: none;
}

.app-dot::after {
  content: "";
  position: absolute;
  left: 24px;
  bottom: -2px;
  width: 7px;
  height: 4px;
  border-radius: 2px;
  background-color: #8b8f96;
}

.app-active {
  background-color: #2a2f38;
  border-radius: 5px;
  width: 50px;
  margin-left: 2px;
}

.app-active::after {
  content: "";
  position: absolute;
  left: 15px;
  bottom: 1px;
  width: 20px;
  height: 4px;
  border-radius: 2px;
  background-color: #4fc3f7;
}

.hp-text {
  font-family: "Liberation Sans", sans-serif;
  font-size: 10px;
  font-style: italic;
  fill: #dff3fb;
}

.help-text {
  font-family: "Liberation Sans", sans-serif;
  font-size: 22px;
  font-weight: 700;
  fill: #fff;
}

.app-yellow {
  position: absolute;
  left: 30px;
  top: 0;
  width: 20px;
  height: 24px;
  border-radius: 50%;
  background-color: #ffc107;
}

.app-count {
  position: absolute;
  left: 26px;
  top: 1px;
  width: 25px;
  height: 24px;
  border-radius: 50%;
  background-color: #47b8f0;
  color: #111;
  font-size: 13px;
  line-height: 24px;
  text-align: center;
}

.tray {
  display: flex;
  align-items: center;
  margin-left: auto;
  padding-right: 25px;
}

.tray-cloud { margin-left: 23px; }

.lang {
  display: flex;
  flex-direction: column;
  align-items: center;
  margin-left: 23px;
  font-size: 14px;
  line-height: 20px;
}

.tray-wifi { margin-left: 23px; }
.tray-vol { margin-left: 10px; }
.tray-bat { margin-left: 10px; }

.clock {
  display: flex;
  flex-direction: column;
  align-items: flex-end;
  margin-left: 23px;
  font-size: 14px;
  line-height: 20px;
}
```
